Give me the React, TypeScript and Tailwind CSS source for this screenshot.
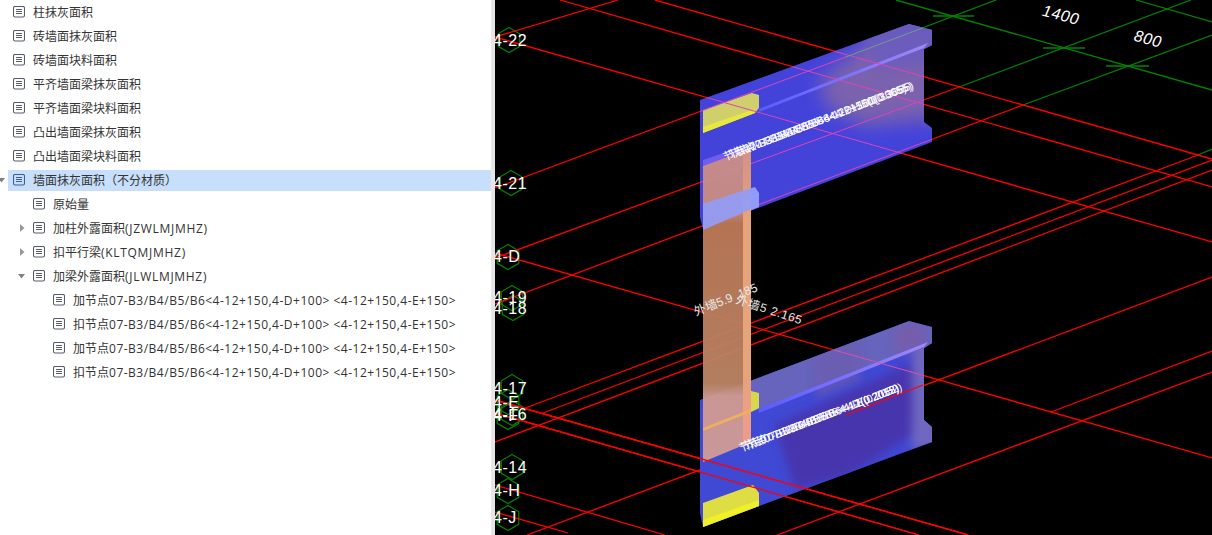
import React from "react";

type Row = { label: string; latin?: string; level: number; arrow?: "right" | "down"; selected?: boolean };

const node = "07-B3/B4/B5/B6<4-12+150,4-D+100> <4-12+150,4-E+150>";
const rows: Row[] = [
  { label: "柱抹灰面积", level: 0 },
  { label: "砖墙面抹灰面积", level: 0 },
  { label: "砖墙面块料面积", level: 0 },
  { label: "平齐墙面梁抹灰面积", level: 0 },
  { label: "平齐墙面梁块料面积", level: 0 },
  { label: "凸出墙面梁抹灰面积", level: 0 },
  { label: "凸出墙面梁块料面积", level: 0 },
  { label: "墙面抹灰面积（不分材质）", level: 0, arrow: "down", selected: true },
  { label: "原始量", level: 1 },
  { label: "加柱外露面积", latin: "(JZWLMJMHZ)", level: 1, arrow: "right" },
  { label: "扣平行梁", latin: "(KLTQMJMHZ)", level: 1, arrow: "right" },
  { label: "加梁外露面积", latin: "(JLWLMJMHZ)", level: 1, arrow: "down" },
  { label: "加节点", latin: node, level: 2 },
  { label: "扣节点", latin: node, level: 2 },
  { label: "加节点", latin: node, level: 2 },
  { label: "扣节点", latin: node, level: 2 },
];

function DocIcon({ selected }: { selected?: boolean }) {
  const c = selected ? "#3f5f8a" : "#565c6e";
  return (
    <svg width="12" height="12" viewBox="0 0 12 12" className="shrink-0">
      <rect x="0.5" y="0.5" width="11" height="10.5" rx="1.5" fill="none" stroke={c} strokeWidth="1.1" />
      <path d="M3 3.5H9M3 5.5H9M3 7.5H9" stroke={c} fill="none" />
    </svg>
  );
}

function Arrow({ dir }: { dir: "right" | "down" }) {
  return dir === "right" ? (
    <svg width="5" height="8" viewBox="0 0 5 8" className="shrink-0">
      <path d="M0 0L4.5 4L0 8Z" fill="#9a9a9a" />
    </svg>
  ) : (
    <svg width="7" height="5" viewBox="0 0 7 5" className="shrink-0 -ml-[2px]">
      <path d="M0 0H7L3.5 4.5Z" fill="#808080" />
    </svg>
  );
}

function TreeRow({ row }: { row: Row }) {
  const indent = row.level === 0 ? "" : row.level === 1 ? "pl-5" : "pl-10";
  const spacing = row.level === 1 ? "tracking-[0.7px]" : "tracking-[0.5px]";
  return (
    <div className={`flex h-6 items-center ${indent}`}>
      <div className="flex w-2 shrink-0 items-center">{row.arrow && <Arrow dir={row.arrow} />}</div>
      <div
        className={`flex h-[21px] flex-1 items-center gap-2 whitespace-nowrap pl-[5px] ${
          row.selected ? "bg-[#c7dffa]" : ""
        }`}
      >
        <DocIcon selected={row.selected} />
        <span className="pt-[2px] text-[12px] leading-none text-[#333333]">
          {row.label}
          {row.latin && <span className={spacing}>{row.latin}</span>}
        </span>
      </div>
    </div>
  );
}

type P = [number, number];
const RED = "#ff0000";
const GREEN = "#008400";

const redLines: P[][] = [
  [[495, 37], [1212, 242]],
  [[560, 0], [1212, 187]],
  [[655, 0], [1212, 159]],
  [[495, 253], [1212, 458]],
  [[495, 400], [968, 535]],
  [[495, 413], [919, 535]],
  [[495, 485], [665, 535]],
  [[495, 512], [568, 533]],
  [[495, 37], [618, 0]],
  [[495, 188], [846, 57]],
  [[495, 258], [959, 87]],
  [[495, 304], [1023, 105]],
  [[520, 410], [1198, 155]],
  [[543, 413], [1212, 160]],
  [[495, 442], [1212, 170]],
  [[527, 535], [1212, 277]],
  [[777, 535], [1212, 372]],
  [[1051, 412], [1212, 351]],
];

const greenLines: P[][] = [
  [[846, 57], [996, 0]],
  [[959, 87], [1191, 0]],
  [[1023, 105], [1212, 35]],
  [[896, 0], [1212, 90]],
  [[1136, 0], [1212, 22]],
  [[1198, 155], [1212, 149]],
  [[933, 16], [974, 16]],
  [[1043, 48], [1085, 48]],
  [[1106, 66], [1149, 66]],
];

const beamA = "700,100 909,24 932,30 932,45 924,49 924,122 932,128 932,142 703,229 700,217";
const beamB = "700,400 909,321 932,327 932,343 924,348 924,420 932,427 932,442 703,527 700,513";

const axes: { t: string; x: number; y: number; cx: number; cy: number }[] = [
  { t: "4-22", x: 493, y: 46, cx: 509, cy: 40 },
  { t: "4-21", x: 493, y: 189, cx: 511, cy: 183 },
  { t: "4-D", x: 493, y: 262, cx: 508, cy: 257 },
  { t: "4-19", x: 493, y: 303, cx: 512, cy: 298 },
  { t: "4-18", x: 493, y: 314, cx: 513, cy: 308 },
  { t: "4-17", x: 493, y: 394, cx: 512, cy: 387 },
  { t: "4-E", x: 493, y: 408, cx: 508, cy: 402 },
  { t: "4-F", x: 493, y: 421, cx: 508, cy: 417 },
  { t: "4-16", x: 493, y: 420, cx: 512, cy: 413 },
  { t: "4-14", x: 493, y: 473, cx: 512, cy: 467 },
  { t: "4-H", x: 493, y: 496, cx: 508, cy: 491 },
  { t: "4-J", x: 493, y: 523, cx: 508, cy: 518 },
];

function hex(cx: number, cy: number, r = 12.5) {
  return [0, 1, 2, 3, 4, 5]
    .map((i) => {
      const a = (Math.PI / 3) * i - Math.PI / 2;
      return `${(cx + r * Math.cos(a)).toFixed(1)},${(cy + r * Math.sin(a)).toFixed(1)}`;
    })
    .join(" ");
}

const Lines = ({ list, color, w = 1.3 }: { list: P[][]; color: string; w?: number }) => (
  <g stroke={color} strokeWidth={w} fill="none">
    {list.map((l, i) => (
      <line key={i} x1={l[0][0]} y1={l[0][1]} x2={l[1][0]} y2={l[1][1]} />
    ))}
  </g>
);

function BeamLabel({ x, y, offsets, labels }: { x: number; y: number; offsets: number[]; labels: string[] }) {
  return (
    <g fill="#ffffff" fontSize="11" fontFamily="'Liberation Sans','Noto Sans CJK SC',sans-serif">
      {offsets.map((o, i) => (
        <text key={i} transform={`translate(${x + o * 0.934},${y - o * 0.358}) rotate(-21)`}>
          {labels[i]}
        </text>
      ))}
    </g>
  );
}

function Scene() {
  return (
    <svg viewBox="495 0 717 535" className="block h-full w-full">
      <defs>
        <clipPath id="ca"><polygon points={beamA} /></clipPath>
        <clipPath id="cb"><polygon points={beamB} /></clipPath>
        <filter id="bl" x="-30%" y="-30%" width="160%" height="160%"><feGaussianBlur stdDeviation="9" /></filter>
        <filter id="bs" x="-30%" y="-30%" width="160%" height="160%"><feGaussianBlur stdDeviation="5" /></filter>
        <linearGradient id="col" x1="0" y1="0" x2="0" y2="1">
          <stop offset="0" stopColor="#cc8f88" />
          <stop offset="0.2" stopColor="#c98c84" />
          <stop offset="0.24" stopColor="#bd7a58" />
          <stop offset="0.75" stopColor="#bc8464" />
          <stop offset="0.79" stopColor="#d09a90" />
          <stop offset="1" stopColor="#d29c98" />
        </linearGradient>
        <linearGradient id="colr" x1="0" y1="0" x2="0" y2="1">
          <stop offset="0" stopColor="#d49088" />
          <stop offset="0.24" stopColor="#e8a67c" />
          <stop offset="0.75" stopColor="#e8a67c" />
          <stop offset="1" stopColor="#f09a8c" />
        </linearGradient>
        <linearGradient id="stripe" x1="0" y1="0" x2="1" y2="0">
          <stop offset="0" stopColor="#5a5cff" />
          <stop offset="1" stopColor="#a088f8" />
        </linearGradient>
      </defs>

      {axes.map((a) => (
        <polygon key={a.t} points={hex(a.cx, a.cy)} fill="none" stroke={GREEN} strokeWidth="1.2" />
      ))}
      <Lines list={greenLines} color={GREEN} />
      <Lines list={redLines} color={RED} />

      <polygon points={beamA} fill="#4343da" />
      <g clipPath="url(#ca)">
        <polygon points="818,82 880,30 945,20 945,118 865,126 828,108" fill="#7a62ae" filter="url(#bl)" />
        <polygon points="860,30 925,15 945,30 945,60 880,70" fill="#6a5cc0" opacity="0.8" filter="url(#bs)" />
      </g>
      <polygon points="759,109 928,43 924,48 759,112" fill="url(#stripe)" />
      <polygon points="703,110 752,93 759,95 759,108 755,113 703,133" fill="#cfcf6c" />
      <polygon points="703,127 755,109 755,113 703,133" fill="#e8e83c" />
      <polygon points="703,160 747,145 750,148 703,166" fill="#6f5cf0" />

      <polygon points={beamB} fill="#3f49d4" />
      <g clipPath="url(#cb)">
        <polygon points="775,425 930,355 920,430 850,475 795,490" fill="#4634ae" filter="url(#bs)" />
        <polygon points="912,330 945,330 945,445 912,450" fill="#7068c0" filter="url(#bs)" />
        <polygon points="751,380 909,321 932,327 932,343 924,348 751,412" fill="#6664bc" />
        <polygon points="815,355 860,338 860,380 815,398" fill="#6d5cb0" opacity="0.7" filter="url(#bs)" />
        <polygon points="895,325 925,325 925,345 895,355" fill="#7a5ca8" opacity="0.8" filter="url(#bs)" />
      </g>
      <polygon points="759,409 928,342 924,347 759,413" fill="url(#stripe)" />
      <polygon points="751,391 759,393 759,408 751,412" fill="#d8d850" />
      <polygon points="703,503 753,485 759,493 759,506 703,527" fill="#dede44" />
      <polygon points="703,520 759,500 759,506 703,527" fill="#f0f028" />

      <g clipPath="url(#ca)"><Lines list={redLines} color="#dc44b8" w={1} /></g>
      <g clipPath="url(#ca)"><line x1="846" y1="57" x2="925" y2="27" stroke="#6aa08a" strokeWidth="1" /></g>
      <g clipPath="url(#cb)"><Lines list={[[[495, 253], [1212, 458]]]} color="#dc50a8" w={1} /></g>

      <polygon points="703,204 755,187 759,193 759,207 703,230" fill="#8f9cfb" />
      <polygon points="703,166 751,148 751,442 703,462" fill="url(#col)" opacity="0.95" />
      <polygon points="743,151 751,148 751,442 743,445" fill="url(#colr)" opacity="0.95" />
      <polygon points="703,204 751,188 751,209 703,230" fill="#929cf6" opacity="0.92" />
      <polygon points="703,428 751,409 751,412 703,431" fill="#eeb060" />
      <Lines
        list={[[[495, 400], [968, 535]], [[495, 413], [919, 535]], [[846, 415], [923, 385]]]}
        color={RED}
      />

      <BeamLabel
        x={725}
        y={161}
        offsets={[0, 6, 12]}
        labels={[
          "节点07-B3/B4/B5/B6<4-12+150(0.3065)",
          "节点07-B3/B4/B5/B6<4-12+150(0.3055)",
          "节点07-B3/B4/B5/B6<4-D+100(0.3065)",
        ]}
      />
      <BeamLabel
        x={741}
        y={452}
        offsets={[0, 4, 8]}
        labels={["节点07-B3/B4/B5/B6<4-12(0.2052)", "节点07-B3/B4/B5/B6<4-D(0.2015)", "节点07-B3/B4/B5/B6<4-E(0.2052)"]}
      />

      <g fill="#e8e8e8" fontSize="12" fontFamily="'Liberation Sans','Noto Sans CJK SC',sans-serif">
        <text transform="translate(696,316) rotate(-22)">外墙5.9 .185</text>
        <text transform="translate(735,303) rotate(18)" letterSpacing="0.6">外墙5  2.165</text>
      </g>

      <g fill="#ffffff" fontSize="16" letterSpacing="0.5" fontFamily="'Liberation Sans',sans-serif">
        {axes.map((a) => (
          <text key={a.t} x={a.x} y={a.y}>{a.t}</text>
        ))}
        <text transform="translate(1059,20) rotate(15) skewX(-8)" textAnchor="middle">1400</text>
        <text transform="translate(1146,44) rotate(15) skewX(-8)" textAnchor="middle">800</text>
      </g>
    </svg>
  );
}

export default function App() {
  return (
    <div className="flex h-[535px] w-[1212px] overflow-hidden bg-white font-['Open_Sans','Noto_Sans_CJK_SC',sans-serif]">
      <div className="w-[491px] shrink-0 overflow-hidden">
        {rows.map((r, i) => (
          <TreeRow key={i} row={r} />
        ))}
      </div>
      <div className="w-1 shrink-0 bg-[#e6e6e6]" />
      <div className="flex-1 overflow-hidden bg-black">
        <Scene />
      </div>
    </div>
  );
}
